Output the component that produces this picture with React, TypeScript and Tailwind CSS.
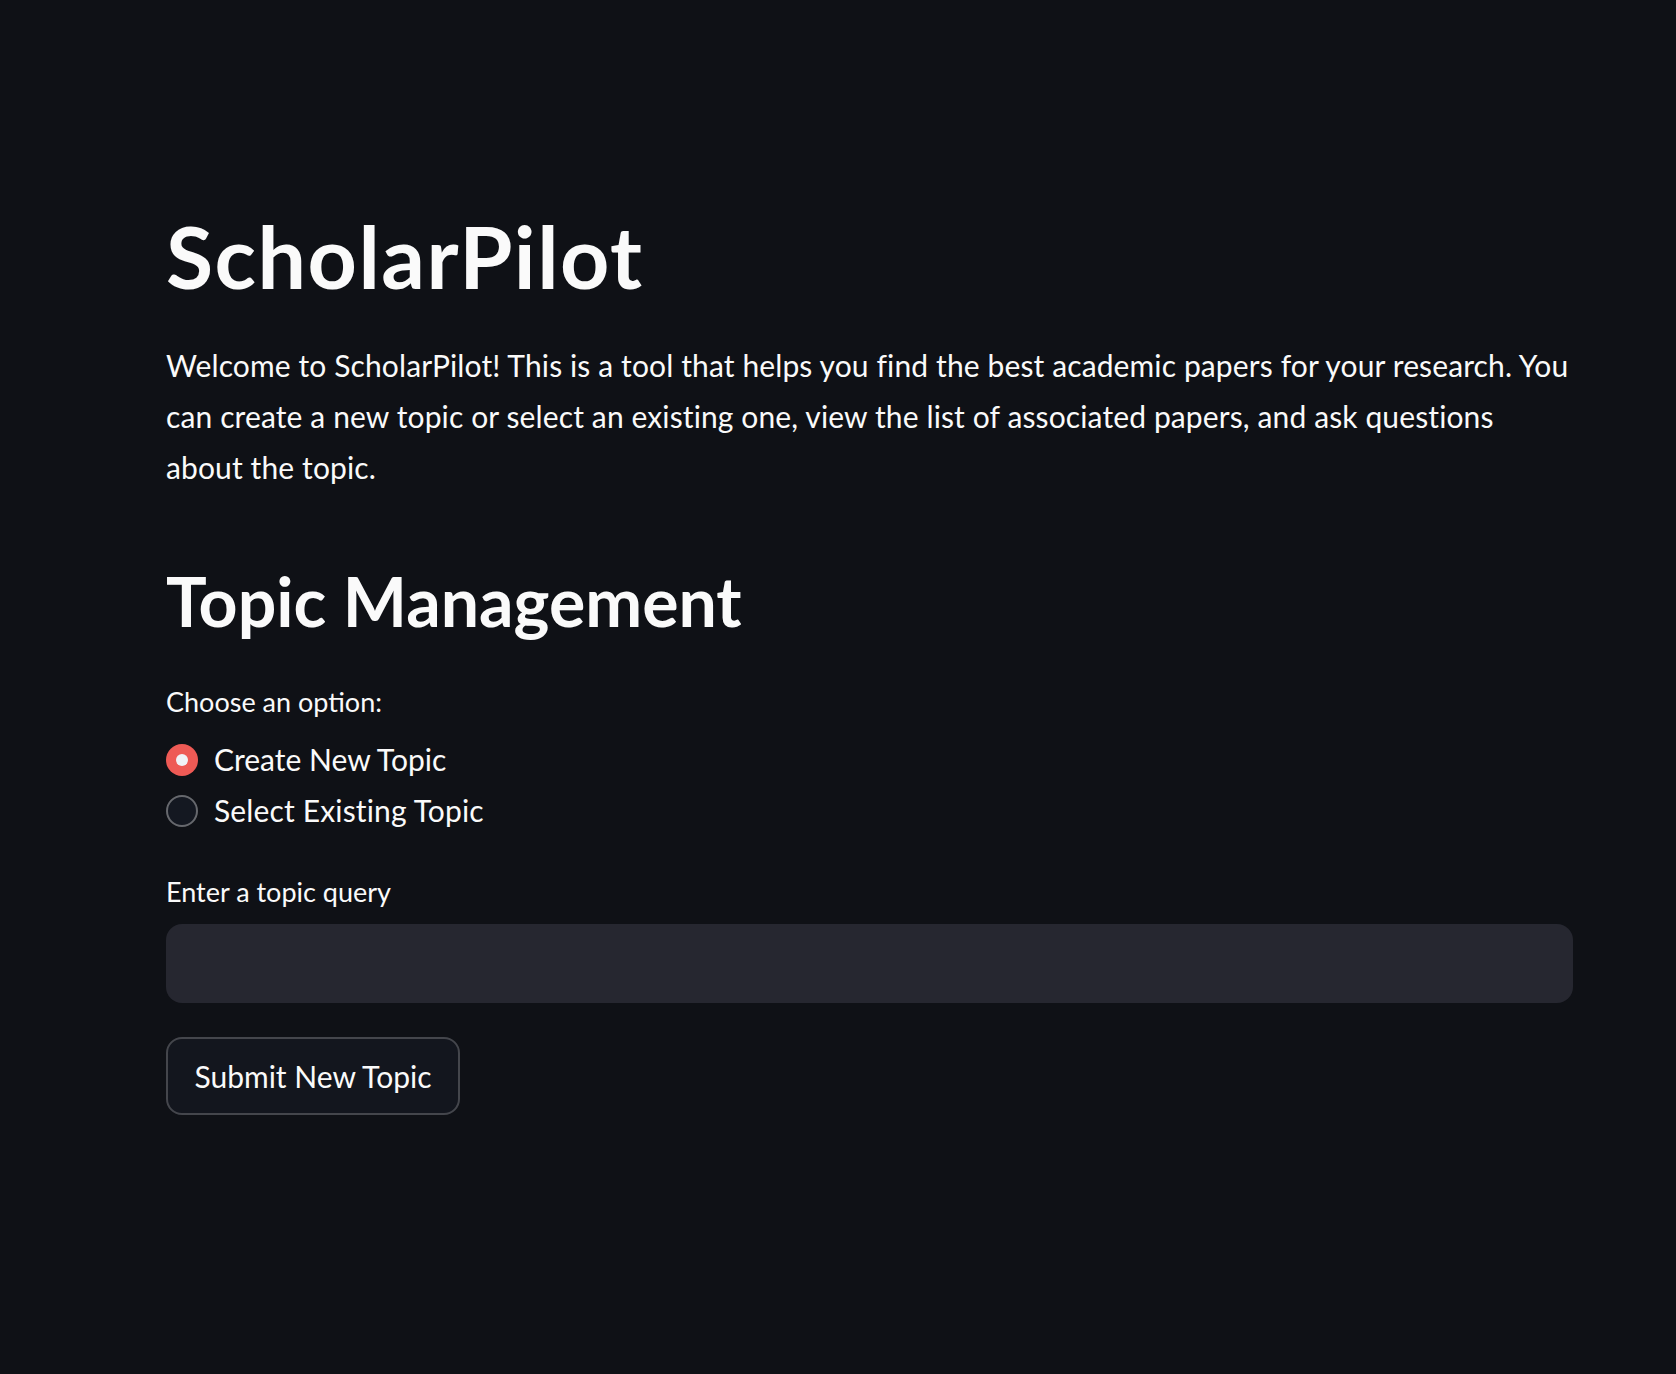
import React from "react";

export default function App() {
  return (
    <div
      className="min-h-[1374px] w-full bg-[#0f1116] text-[#fafafa]"
      style={{ fontFamily: "Lato, 'Noto Sans', sans-serif" }}
    >
      <div className="flex w-[1573px] flex-col pl-[166px] pt-[206px]">
        <h1 className="text-[86px] font-bold leading-[100px] tracking-[1.5px]">ScholarPilot</h1>
        <p className="mt-[34px] text-[30px] leading-[51px] tracking-[0.12px]">
          <span className="block whitespace-nowrap">
            Welcome to ScholarPilot! This is a tool that helps you find the best academic papers for your research. You
          </span>
          <span className="block whitespace-nowrap">
            can create a new topic or select an existing one, view the list of associated papers, and ask questions
          </span>
          <span className="block whitespace-nowrap">about the topic.</span>
        </p>
        <h2 className="mt-[66px] text-[68px] font-bold leading-[84px]">Topic Management</h2>
        <div className="mt-[41px] text-[27px] leading-[36px]">Choose an option:</div>
        <div className="mt-[14px] flex flex-col">
          <label className="flex h-[51px] items-center gap-[16px] text-[30px] leading-[51px]">
            <span className="flex h-[32px] w-[32px] items-center justify-center rounded-full bg-[#ee5a55]">
              <span className="h-[12px] w-[12px] rounded-full bg-[#f0f2f6]" />
            </span>
            Create New Topic
          </label>
          <label className="flex h-[51px] items-center gap-[16px] text-[30px] leading-[51px] tracking-[0.15px]">
            <span className="h-[32px] w-[32px] rounded-full border-2 border-[#66686d] bg-[#141821]" />
            Select Existing Topic
          </label>
        </div>
        <div className="mt-[38px] text-[27px] leading-[36px]">Enter a topic query</div>
        <input
          className="mt-[14px] h-[79px] w-full rounded-[16px] bg-[#262730] px-[24px] text-[30px] text-[#fafafa] outline-none"
          type="text"
        />
        <button className="mt-[34px] flex h-[78px] w-[294px] items-center justify-center rounded-[16px] border-2 border-[#44464c] bg-[#13161e] text-[30px] leading-[36px] text-[#fafafa]">
          Submit New Topic
        </button>
      </div>
    </div>
  );
}
